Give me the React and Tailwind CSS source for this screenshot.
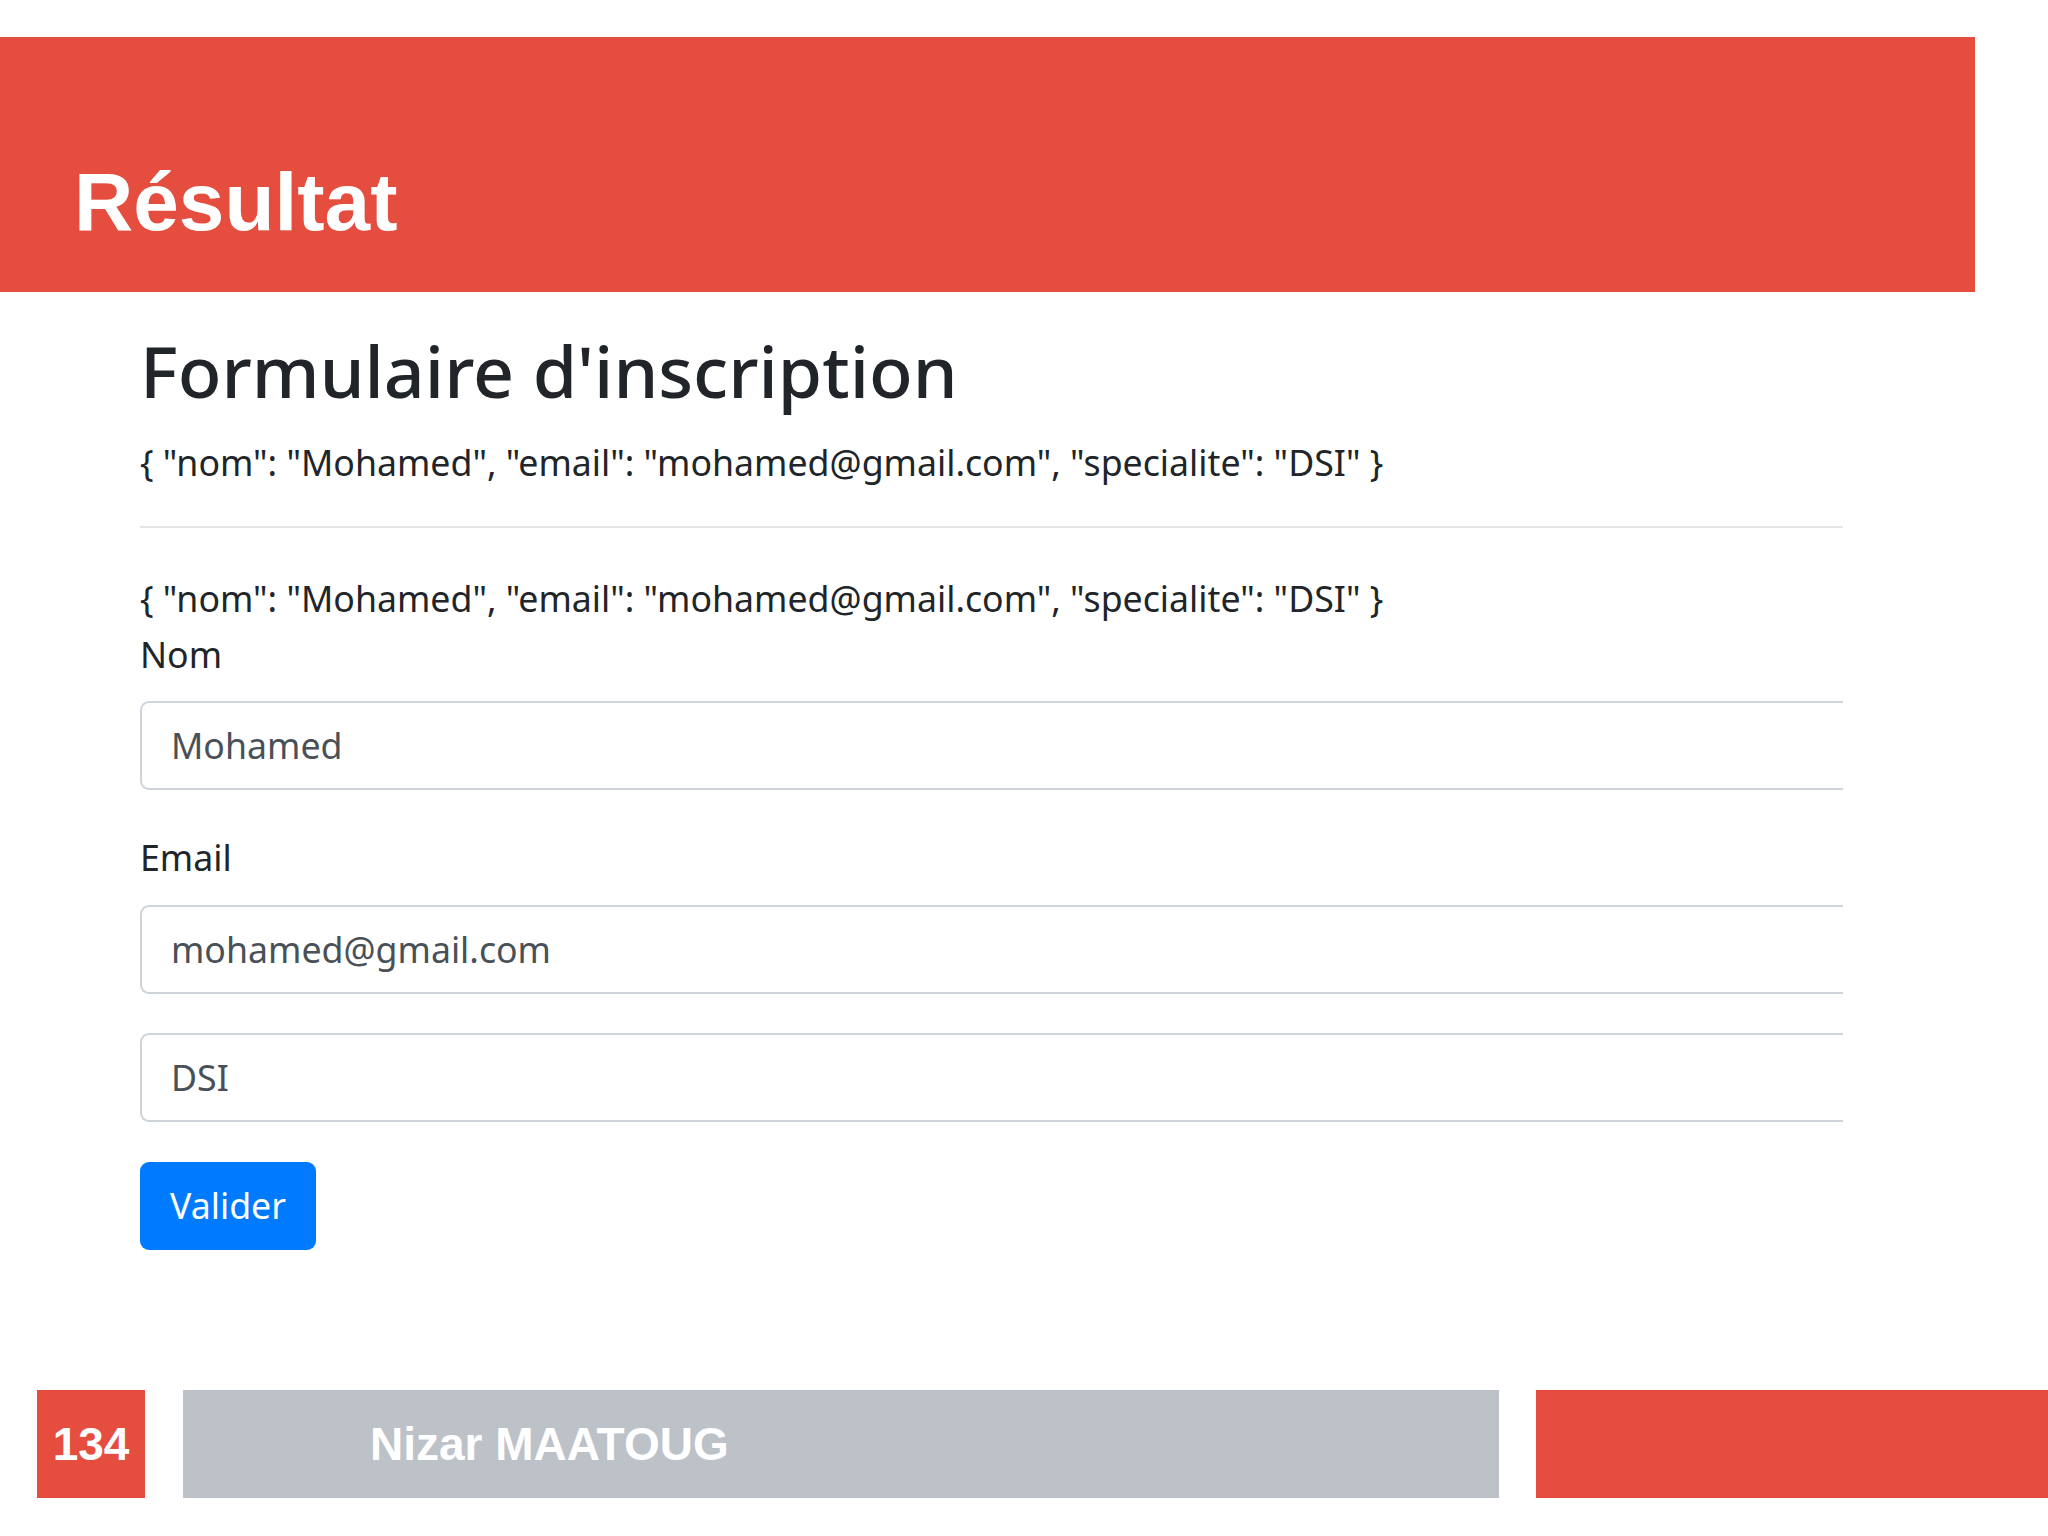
import React from 'react';

const json = '{ "nom": "Mohamed", "email": "mohamed@gmail.com", "specialite": "DSI" }';

const Field = ({ value, className = '' }) => (
  <div
    className={`h-[89px] w-full border-2 border-r-0 border-[#ced4da] rounded-l-[9px] flex items-center pl-[29px] text-[#495057] ${className}`}
  >
    {value}
  </div>
);

const App = () => {
  return (
    <div className="w-[2048px] h-[1536px] bg-white flex flex-col overflow-hidden">
      <header className="mt-[37px] h-[255px] w-[1975px] bg-[#e54e3f] pl-[74px] pt-[124px]">
        <h1 className="text-white font-bold text-[82px] leading-none font-['Liberation_Sans',Arial,sans-serif]">
          Résultat
        </h1>
      </header>

      <main className="ml-[140px] w-[1703px] text-[#212529] text-[35.7px] font-['Noto_Sans','Open_Sans',sans-serif]">
        <h2 className="mt-[33px] mb-[19px] text-[71.6px] leading-[90px] font-medium">
          Formulaire d'inscription
        </h2>
        <p className="leading-[56px]">{json}</p>
        <div className="mt-[36px] mb-[42px] h-[2px] bg-[#e6e6e6]" />
        <p className="leading-[56px]">{json}</p>

        <label className="block leading-[56px] mb-[19px]">Nom</label>
        <Field value="Mohamed" className="mb-[39px]" />

        <label className="block leading-[56px] mb-[20px]">Email</label>
        <Field value="mohamed@gmail.com" className="mb-[39px]" />

        <Field value="DSI" className="mb-[40px]" />

        <button className="h-[88px] px-[30px] rounded-[9px] bg-[#007bff] text-white">
          Valider
        </button>
      </main>

      <footer className="mt-auto mb-[38px] h-[108px] flex font-['Liberation_Sans',Arial,sans-serif] font-bold text-white text-[46px]">
        <div className="ml-[37px] w-[108px] bg-[#e54e3f] flex items-center justify-center">134</div>
        <div className="ml-[38px] w-[1316px] bg-[#bdc1c8] flex items-center pl-[187px]">Nizar MAATOUG</div>
        <div className="ml-[37px] flex-1 bg-[#e54e3f]" />
      </footer>
    </div>
  );
};

export default App;
